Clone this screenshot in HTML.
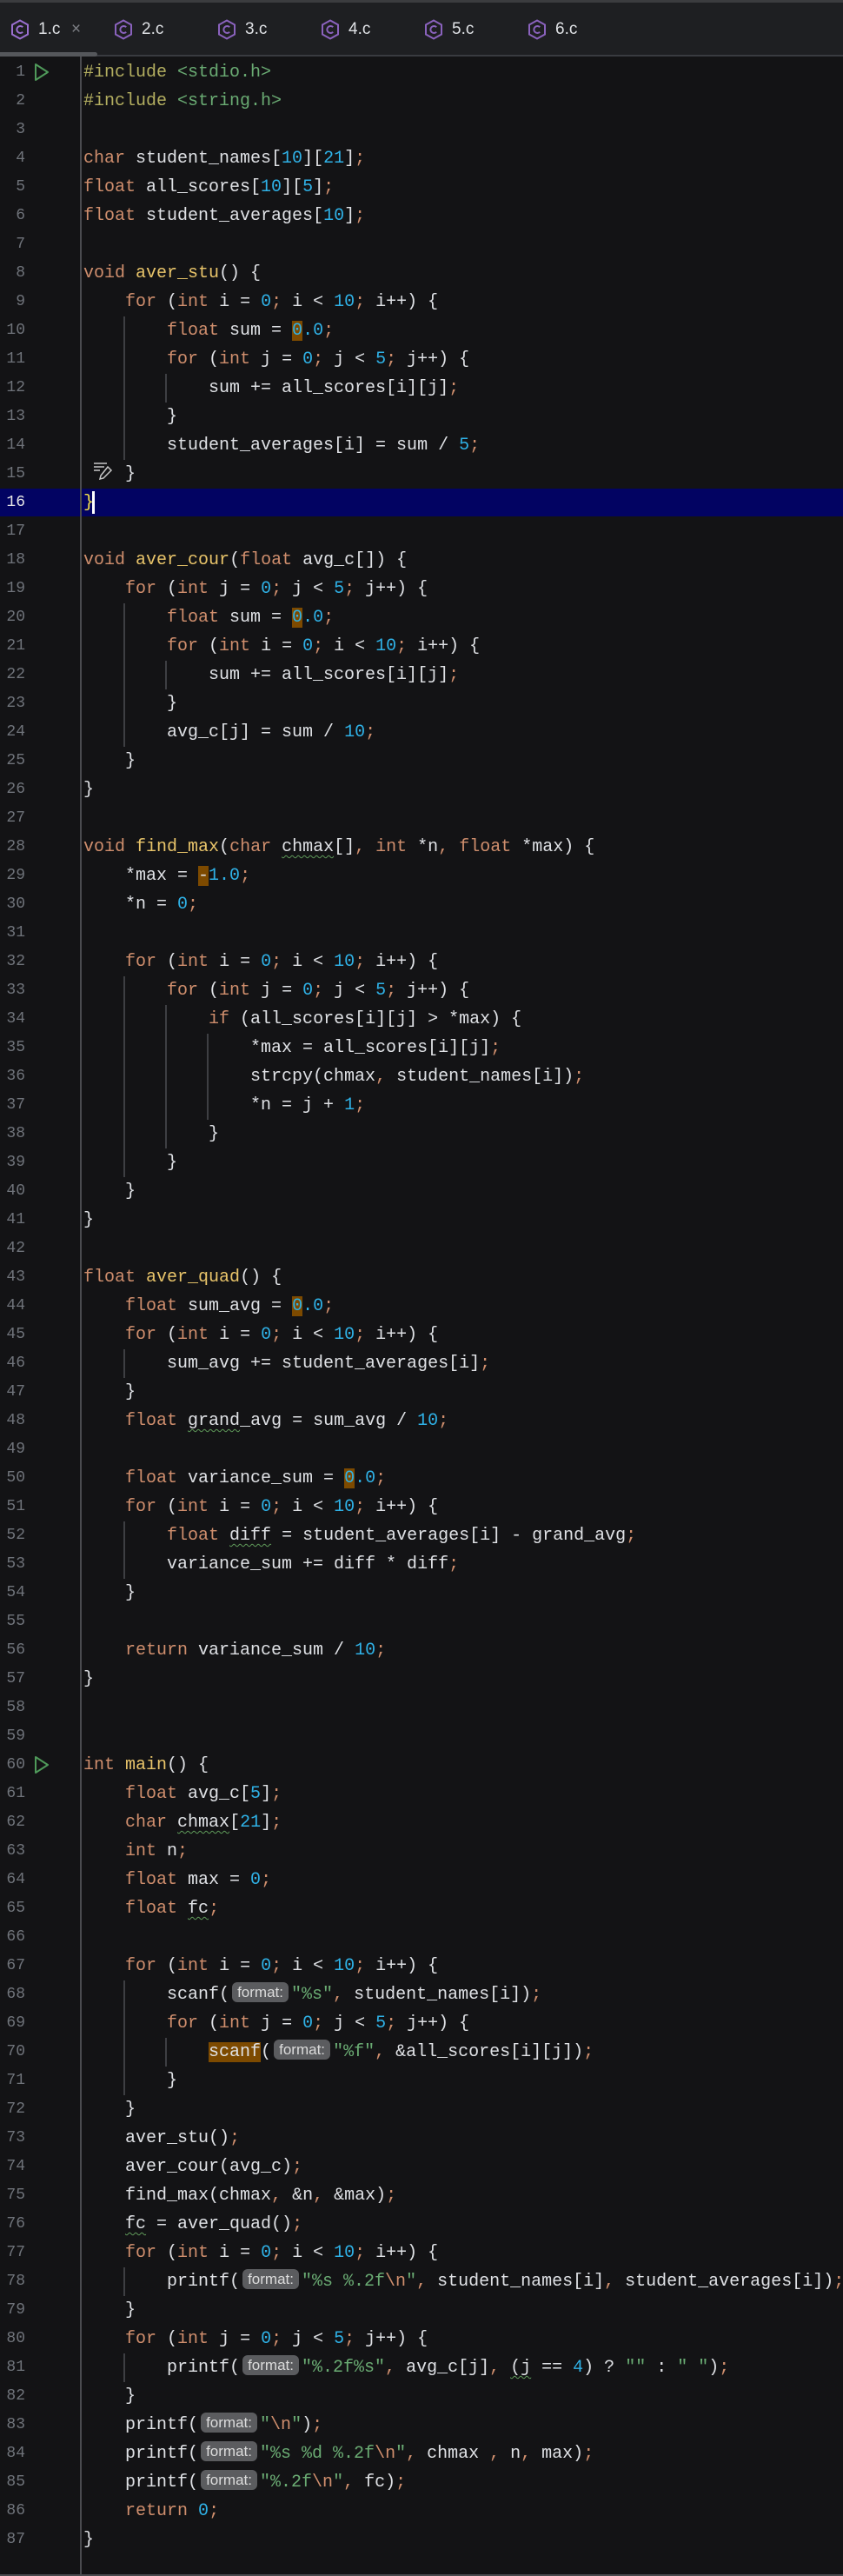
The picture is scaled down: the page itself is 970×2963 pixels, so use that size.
<!DOCTYPE html>
<html><head><meta charset="utf-8"><style>
*{margin:0;padding:0;box-sizing:border-box}
body{width:970px;height:2963px;background:#131315;overflow:hidden;position:relative;font-family:"Liberation Mono",monospace}
#top{position:absolute;left:0;top:0;width:970px;height:3px;background:#3b3c3f}
#tabs{position:absolute;left:0;top:3px;width:970px;height:62px;background:#1e1f22;border-bottom:2px solid #393b40}
#thumb{position:absolute;left:0;top:60px;width:112px;height:5px;background:#55575b;border-radius:0 3px 3px 0}
.tab{position:absolute;top:20px;height:28px;font:19px "Liberation Sans",sans-serif;color:#dfe1e5;line-height:28px}
.tab svg{position:absolute;left:0;top:2px}
.tab span{position:absolute;left:32px;top:0}
#gut{position:absolute;left:92px;top:65px;width:2px;height:2896px;background:#4a4b4f}
#bot{position:absolute;left:0;top:2961px;width:970px;height:2px;background:#4a4b4f}
#hl{position:absolute;left:0;top:562px;width:970px;height:32px;background:#020362}
#nums{position:absolute;left:0;top:67px;width:29px;text-align:right;font-size:18px;line-height:33px;color:#6f737a;white-space:pre}
#code{position:absolute;left:96px;top:67px;font-size:20px;line-height:33px;color:#dfe1e5;white-space:pre}
.k{color:#cf8e6d}.n{color:#2fb1e6}.s{color:#6aab73}.p{color:#b3ae60}.f{color:#e8c46a}.o{color:#cf8e6d}
.m{background:#7d4a00}
.w{text-decoration:underline wavy #5f9a5a;text-decoration-thickness:1px;text-underline-offset:4px}
.h{display:inline-block;width:65px;height:23px;margin:0 3px 0 3px;background:#5b5c5f;border-radius:6px;font:17px "Liberation Sans",sans-serif;color:#dcdcdc;line-height:23px;text-align:center;vertical-align:2px}
.g{position:absolute;width:2px;background:#3e3f43}
.run{position:absolute;left:38px}
</style></head><body>
<div id="top"></div>
<div id="tabs"></div>
<div id="thumb"></div>
<div class="tab" style="left:12px"><svg width="22" height="24" viewBox="0 0 22 24"><path d="M11 1.5 20 6.5v11L11 22.5 2 17.5v-11z" fill="none" stroke="#9a6fd0" stroke-width="2"/><path d="M14.2 9.2A4 4 0 1 0 14.2 14.8" fill="none" stroke="#9a6fd0" stroke-width="2"/></svg><span>1.c</span><span style="left:70px;color:#7d7f85">×</span></div>
<div class="tab" style="left:131px"><svg width="22" height="24" viewBox="0 0 22 24"><path d="M11 1.5 20 6.5v11L11 22.5 2 17.5v-11z" fill="none" stroke="#8a62bd" stroke-width="2"/><path d="M14.2 9.2A4 4 0 1 0 14.2 14.8" fill="none" stroke="#8a62bd" stroke-width="2"/></svg><span>2.c</span></div>
<div class="tab" style="left:250px"><svg width="22" height="24" viewBox="0 0 22 24"><path d="M11 1.5 20 6.5v11L11 22.5 2 17.5v-11z" fill="none" stroke="#8a62bd" stroke-width="2"/><path d="M14.2 9.2A4 4 0 1 0 14.2 14.8" fill="none" stroke="#8a62bd" stroke-width="2"/></svg><span>3.c</span></div>
<div class="tab" style="left:369px"><svg width="22" height="24" viewBox="0 0 22 24"><path d="M11 1.5 20 6.5v11L11 22.5 2 17.5v-11z" fill="none" stroke="#8a62bd" stroke-width="2"/><path d="M14.2 9.2A4 4 0 1 0 14.2 14.8" fill="none" stroke="#8a62bd" stroke-width="2"/></svg><span>4.c</span></div>
<div class="tab" style="left:488px"><svg width="22" height="24" viewBox="0 0 22 24"><path d="M11 1.5 20 6.5v11L11 22.5 2 17.5v-11z" fill="none" stroke="#8a62bd" stroke-width="2"/><path d="M14.2 9.2A4 4 0 1 0 14.2 14.8" fill="none" stroke="#8a62bd" stroke-width="2"/></svg><span>5.c</span></div>
<div class="tab" style="left:607px"><svg width="22" height="24" viewBox="0 0 22 24"><path d="M11 1.5 20 6.5v11L11 22.5 2 17.5v-11z" fill="none" stroke="#8a62bd" stroke-width="2"/><path d="M14.2 9.2A4 4 0 1 0 14.2 14.8" fill="none" stroke="#8a62bd" stroke-width="2"/></svg><span>6.c</span></div>
<div id="hl"></div>
<div id="gut"></div>
<div id="bot"></div>
<div class="g" style="left:142px;top:364px;height:165px"></div>
<div class="g" style="left:190px;top:430px;height:33px"></div>
<div class="g" style="left:142px;top:694px;height:165px"></div>
<div class="g" style="left:190px;top:760px;height:33px"></div>
<div class="g" style="left:142px;top:1123px;height:231px"></div>
<div class="g" style="left:190px;top:1156px;height:165px"></div>
<div class="g" style="left:238px;top:1189px;height:99px"></div>
<div class="g" style="left:142px;top:1552px;height:33px"></div>
<div class="g" style="left:142px;top:1750px;height:66px"></div>
<div class="g" style="left:142px;top:2278px;height:132px"></div>
<div class="g" style="left:190px;top:2344px;height:33px"></div>
<div class="g" style="left:142px;top:2608px;height:33px"></div>
<div class="g" style="left:142px;top:2707px;height:33px"></div>
<svg class="run" style="top:72px" width="20" height="22" viewBox="0 0 20 22"><path d="M3 2 17 11 3 20z" fill="none" stroke="#4f9a5a" stroke-width="2" stroke-linejoin="round"/></svg>
<svg class="run" style="top:2019px" width="20" height="22" viewBox="0 0 20 22"><path d="M3 2 17 11 3 20z" fill="none" stroke="#4f9a5a" stroke-width="2" stroke-linejoin="round"/></svg>
<svg style="position:absolute;left:106px;top:530px" width="24" height="24" viewBox="0 0 24 24"><path d="M2 3h15M2 7h12M2 11h7" stroke="#c8c8c8" stroke-width="1.5" fill="none"/><path d="M18 7l4 4-9 9-4 1 1-4z" stroke="#c8c8c8" stroke-width="1.5" fill="none"/></svg>
<div style="position:absolute;left:106px;top:565px;width:3px;height:26px;background:#fff"></div>
<div id="nums">1
2
3
4
5
6
7
8
9
10
11
12
13
14
15
<span style="color:#e6e6e6">16</span>
17
18
19
20
21
22
23
24
25
26
27
28
29
30
31
32
33
34
35
36
37
38
39
40
41
42
43
44
45
46
47
48
49
50
51
52
53
54
55
56
57
58
59
60
61
62
63
64
65
66
67
68
69
70
71
72
73
74
75
76
77
78
79
80
81
82
83
84
85
86
87</div>
<div id="code"><span class="p">#include</span> <span class="s">&lt;stdio.h&gt;</span>
<span class="p">#include</span> <span class="s">&lt;string.h&gt;</span>

<span class="k">char</span> student_names[<span class="n">10</span>][<span class="n">21</span>]<span class="o">;</span>
<span class="k">float</span> all_scores[<span class="n">10</span>][<span class="n">5</span>]<span class="o">;</span>
<span class="k">float</span> student_averages[<span class="n">10</span>]<span class="o">;</span>

<span class="k">void</span> <span class="f">aver_stu</span>() {
    <span class="k">for</span> (<span class="k">int</span> i = <span class="n">0</span><span class="o">;</span> i &lt; <span class="n">10</span><span class="o">;</span> i++) {
        <span class="k">float</span> sum = <span class="n"><span class="m">0</span>.0</span><span class="o">;</span>
        <span class="k">for</span> (<span class="k">int</span> j = <span class="n">0</span><span class="o">;</span> j &lt; <span class="n">5</span><span class="o">;</span> j++) {
            sum += all_scores[i][j]<span class="o">;</span>
        }
        student_averages[i] = sum / <span class="n">5</span><span class="o">;</span>
    }
<span style="color:#f5e14a">}</span>

<span class="k">void</span> <span class="f">aver_cour</span>(<span class="k">float</span> avg_c[]) {
    <span class="k">for</span> (<span class="k">int</span> j = <span class="n">0</span><span class="o">;</span> j &lt; <span class="n">5</span><span class="o">;</span> j++) {
        <span class="k">float</span> sum = <span class="n"><span class="m">0</span>.0</span><span class="o">;</span>
        <span class="k">for</span> (<span class="k">int</span> i = <span class="n">0</span><span class="o">;</span> i &lt; <span class="n">10</span><span class="o">;</span> i++) {
            sum += all_scores[i][j]<span class="o">;</span>
        }
        avg_c[j] = sum / <span class="n">10</span><span class="o">;</span>
    }
}

<span class="k">void</span> <span class="f">find_max</span>(<span class="k">char</span> <span class="w">chmax</span>[]<span class="o">,</span> <span class="k">int</span> *n<span class="o">,</span> <span class="k">float</span> *max) {
    *max = <span class="m">-</span><span class="n">1.0</span><span class="o">;</span>
    *n = <span class="n">0</span><span class="o">;</span>

    <span class="k">for</span> (<span class="k">int</span> i = <span class="n">0</span><span class="o">;</span> i &lt; <span class="n">10</span><span class="o">;</span> i++) {
        <span class="k">for</span> (<span class="k">int</span> j = <span class="n">0</span><span class="o">;</span> j &lt; <span class="n">5</span><span class="o">;</span> j++) {
            <span class="k">if</span> (all_scores[i][j] &gt; *max) {
                *max = all_scores[i][j]<span class="o">;</span>
                strcpy(chmax<span class="o">,</span> student_names[i])<span class="o">;</span>
                *n = j + <span class="n">1</span><span class="o">;</span>
            }
        }
    }
}

<span class="k">float</span> <span class="f">aver_quad</span>() {
    <span class="k">float</span> sum_avg = <span class="n"><span class="m">0</span>.0</span><span class="o">;</span>
    <span class="k">for</span> (<span class="k">int</span> i = <span class="n">0</span><span class="o">;</span> i &lt; <span class="n">10</span><span class="o">;</span> i++) {
        sum_avg += student_averages[i]<span class="o">;</span>
    }
    <span class="k">float</span> <span class="w">grand</span>_avg = sum_avg / <span class="n">10</span><span class="o">;</span>

    <span class="k">float</span> variance_sum = <span class="n"><span class="m">0</span>.0</span><span class="o">;</span>
    <span class="k">for</span> (<span class="k">int</span> i = <span class="n">0</span><span class="o">;</span> i &lt; <span class="n">10</span><span class="o">;</span> i++) {
        <span class="k">float</span> <span class="w">diff</span> = student_averages[i] - grand_avg<span class="o">;</span>
        variance_sum += diff * diff<span class="o">;</span>
    }

    <span class="k">return</span> variance_sum / <span class="n">10</span><span class="o">;</span>
}


<span class="k">int</span> <span class="f">main</span>() {
    <span class="k">float</span> avg_c[<span class="n">5</span>]<span class="o">;</span>
    <span class="k">char</span> <span class="w">chmax</span>[<span class="n">21</span>]<span class="o">;</span>
    <span class="k">int</span> n<span class="o">;</span>
    <span class="k">float</span> max = <span class="n">0</span><span class="o">;</span>
    <span class="k">float</span> <span class="w">fc</span><span class="o">;</span>

    <span class="k">for</span> (<span class="k">int</span> i = <span class="n">0</span><span class="o">;</span> i &lt; <span class="n">10</span><span class="o">;</span> i++) {
        scanf(<span class="h">format:</span><span class="s">"%s"</span><span class="o">,</span> student_names[i])<span class="o">;</span>
        <span class="k">for</span> (<span class="k">int</span> j = <span class="n">0</span><span class="o">;</span> j &lt; <span class="n">5</span><span class="o">;</span> j++) {
            <span class="m">scanf</span>(<span class="h">format:</span><span class="s">"%f"</span><span class="o">,</span> &amp;all_scores[i][j])<span class="o">;</span>
        }
    }
    aver_stu()<span class="o">;</span>
    aver_cour(avg_c)<span class="o">;</span>
    find_max(chmax<span class="o">,</span> &amp;n<span class="o">,</span> &amp;max)<span class="o">;</span>
    <span class="w">fc</span> = aver_quad()<span class="o">;</span>
    <span class="k">for</span> (<span class="k">int</span> i = <span class="n">0</span><span class="o">;</span> i &lt; <span class="n">10</span><span class="o">;</span> i++) {
        printf(<span class="h">format:</span><span class="s">"%s %.2f<span class="o">\n</span>"</span><span class="o">,</span> student_names[i]<span class="o">,</span> student_averages[i])<span class="o">;</span>
    }
    <span class="k">for</span> (<span class="k">int</span> j = <span class="n">0</span><span class="o">;</span> j &lt; <span class="n">5</span><span class="o">;</span> j++) {
        printf(<span class="h">format:</span><span class="s">"%.2f%s"</span><span class="o">,</span> avg_c[j]<span class="o">,</span> <span class="w">(j</span> == <span class="n">4</span>) ? <span class="s">""</span> : <span class="s">" "</span>)<span class="o">;</span>
    }
    printf(<span class="h">format:</span><span class="s">"<span class="o">\n</span>"</span>)<span class="o">;</span>
    printf(<span class="h">format:</span><span class="s">"%s %d %.2f<span class="o">\n</span>"</span><span class="o">,</span> chmax <span class="o">,</span> n<span class="o">,</span> max)<span class="o">;</span>
    printf(<span class="h">format:</span><span class="s">"%.2f<span class="o">\n</span>"</span><span class="o">,</span> fc)<span class="o">;</span>
    <span class="k">return</span> <span class="n">0</span><span class="o">;</span>
}</div>
</body></html>
